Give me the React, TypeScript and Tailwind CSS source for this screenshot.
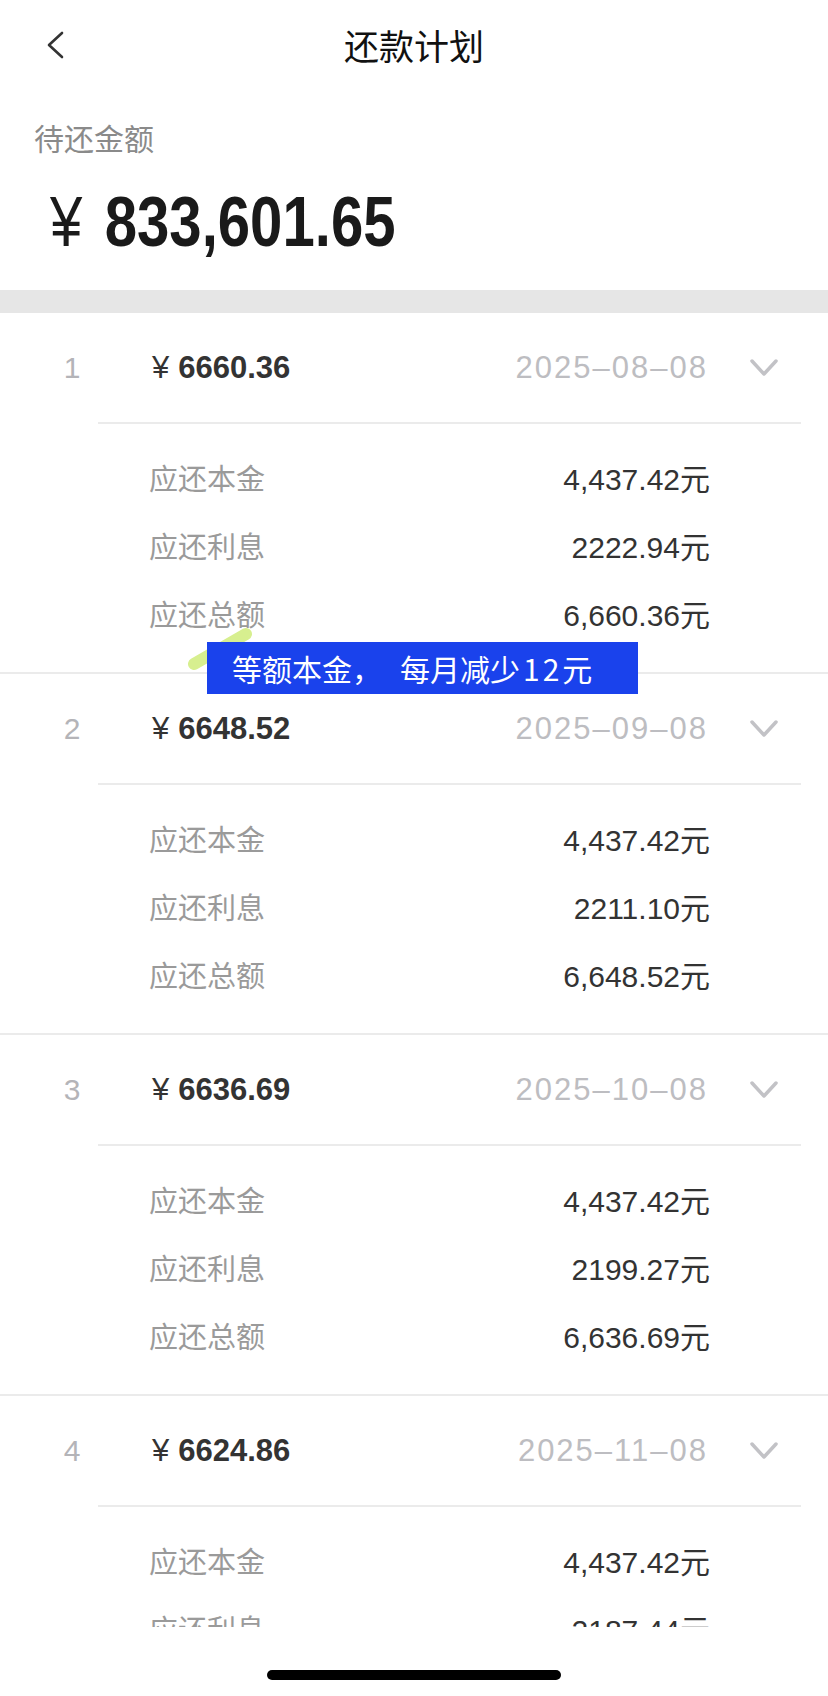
import React from 'react';

type Plan = {
  idx: number;
  amount: string;
  date: string;
  principal: string;
  interest: string;
  total: string;
};

const plans: Plan[] = [
  { idx: 1, amount: '6660.36', date: '2025–08–08', principal: '4,437.42', interest: '2222.94', total: '6,660.36' },
  { idx: 2, amount: '6648.52', date: '2025–09–08', principal: '4,437.42', interest: '2211.10', total: '6,648.52' },
  { idx: 3, amount: '6636.69', date: '2025–10–08', principal: '4,437.42', interest: '2199.27', total: '6,636.69' },
  { idx: 4, amount: '6624.86', date: '2025–11–08', principal: '4,437.42', interest: '2187.44', total: '6,624.86' },
];

const Chevron = () => (
  <svg viewBox="0 0 30 20" className="ml-[41px] w-[30px] h-[20px] shrink-0" fill="none">
    <path d="M3 3 L15 16 L27 3" stroke="#c2c2c6" strokeWidth="3.5" strokeLinecap="round" strokeLinejoin="round" />
  </svg>
);

const DetailRow = ({ label, value }: { label: string; value: string }) => (
  <div className="h-[68px] flex items-center justify-between">
    <span className="text-[29px] leading-[40px] text-[#9a9a9a]">{label}</span>
    <span className="text-[30px] leading-[40px] text-[#333]">{value}元</span>
  </div>
);

const PlanSection = ({ plan }: { plan: Plan }) => (
  <div className="border-b-2 border-[#ebebeb]">
    {/* 期数 / 金额 / 日期 */}
    <div className="h-[109px] flex items-center pl-[44px] pr-[49px]">
      <div className="w-[56px] text-center text-[30px] leading-[40px] text-[#b4b4b8]">{plan.idx}</div>
      <div className="ml-[52px] text-[31px] leading-[40px] text-[#333]">
        <span>¥</span>
        <span className="ml-[9px] font-bold">{plan.amount}</span>
      </div>
      <div className="ml-auto text-[31px] leading-[40px] tracking-[2px] text-[#bdbdc1]">{plan.date}</div>
      <Chevron />
    </div>
    <div className="ml-[98px] mr-[27px] h-[2px] bg-[#ebebeb]" />
    {/* 明细 */}
    <div className="pt-[22px] pb-[22px] pl-[149px] pr-[118px]">
      <DetailRow label="应还本金" value={plan.principal} />
      <DetailRow label="应还利息" value={plan.interest} />
      <DetailRow label="应还总额" value={plan.total} />
    </div>
  </div>
);

export default function App() {
  return (
    <div className="relative w-[828px] h-[1696px] overflow-hidden bg-white font-['Liberation_Sans','Noto_Sans_CJK_SC',sans-serif]">
      {/* 导航栏 */}
      <div className="h-[90px] grid grid-cols-[1fr_auto_1fr] items-center">
        <div className="pl-[45px] flex items-center">
          <svg viewBox="0 0 20 28" className="w-[20px] h-[28px]" fill="none">
            <path d="M17 2 L4 14 L17 26" stroke="#333" strokeWidth="2.6" strokeLinecap="round" strokeLinejoin="round" />
          </svg>
        </div>
        <div className="text-[35px] leading-[40px] text-[#111] font-['Noto_Sans_CJK_SC',sans-serif]">还款计划</div>
        <div />
      </div>

      {/* 待还金额 */}
      <div className="pl-[34px] pt-[27px]">
        <div className="text-[30px] leading-[40px] text-[#8a8a8a] font-['Noto_Sans_CJK_SC',sans-serif]">待还金额</div>
        <div className="mt-[25px] h-[80px] pl-[16px] flex items-center text-[70px] leading-[80px] text-[#1a1a1a]">
          <span className="inline-block scale-x-[0.83] origin-left whitespace-nowrap">
            <span>¥</span>
            <span className="ml-[27px] font-bold">833,601.65</span>
          </span>
        </div>
      </div>

      <div className="mt-[28px] h-[23px] bg-[#e6e6e6]" />

      {plans.map((p) => (
        <PlanSection key={p.idx} plan={p} />
      ))}

      {/* 视频字幕贴纸 */}
      <svg className="absolute left-[186px] top-[626px] w-[70px] h-[48px] z-10" viewBox="0 0 70 48" fill="none">
        <path d="M8 38 L60 8" stroke="#d7ef8f" strokeWidth="12" strokeLinecap="round" />
      </svg>
      <div className="absolute left-[207px] top-[642px] w-[431px] h-[52px] z-20 bg-[#1a42ec] flex items-center pl-[25px] text-[30px] leading-[40px] text-white font-['Noto_Sans_CJK_SC',sans-serif]">
        <span className="mr-[18px]">等额本金，</span>
        <span>每月减少</span>
        <span className="ml-[3px] tracking-[3px]">12</span>
        <span>元</span>
      </div>

      {/* 底部 home 指示条 */}
      <div className="absolute left-0 right-0 bottom-0 h-[69px] bg-white z-30 flex justify-center">
        <div className="mt-[43px] w-[294px] h-[10px] rounded-full bg-black" />
      </div>
    </div>
  );
}
